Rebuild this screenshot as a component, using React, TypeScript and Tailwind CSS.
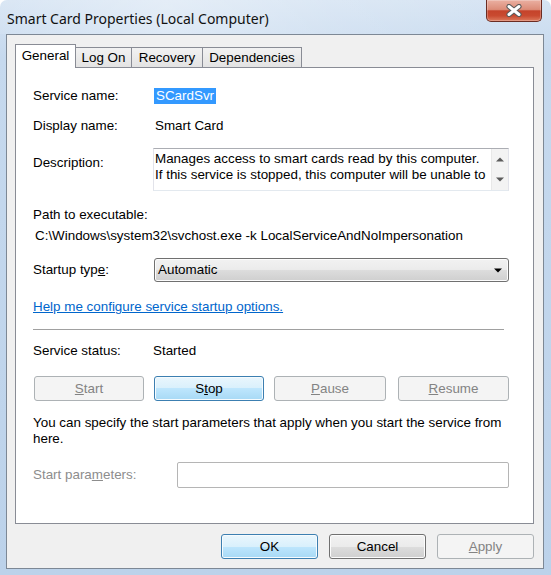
import type { ReactNode } from 'react';

type Kind = 'normal' | 'default' | 'disabled';

function Mn({ children }: { children: ReactNode }) {
    return <span className="underline">{children}</span>;
}

function Button({ kind, w, children }: { kind: Kind; w: string; children: ReactNode }) {
    const look =
        kind === 'default'
            ? 'border-[#3c7fb1] bg-[linear-gradient(180deg,#eaf6fd_0%,#d9f0fc_50%,#bee6fd_50%,#a7d9f5_100%)] shadow-[inset_0_0_0_1px_#f6fbfe] text-black'
            : kind === 'disabled'
                ? 'border-[#adb2b5] bg-[#f4f4f4] text-[#838383]'
                : 'border-[#707070] bg-[linear-gradient(180deg,#f2f2f2_0%,#ebebeb_50%,#dddddd_50%,#cfcfcf_100%)] shadow-[inset_0_0_0_1px_#fcfcfc] text-black';
    return (
        <div className={`${w} h-[25px] shrink-0 rounded-[3px] border flex items-center justify-center ${look}`}>
            {children}
        </div>
    );
}

function CloseButton() {
    return (
        <div className="mr-[9px] w-[56px] h-[22px] rounded-b-[5px] border border-t-0 border-[#6b2c22] bg-[linear-gradient(180deg,#eab0a2_0%,#dc8c78_45%,#c5432b_52%,#c94a30_75%,#dc7a5d_100%)] shadow-[inset_0_0_0_1px_rgba(255,255,255,0.25)] flex items-center justify-center">
            <svg width="18" height="13" viewBox="0 0 18 13">
                <path d="M4 2.5 L14 10.5 M14 2.5 L4 10.5" stroke="#5a5a5a" strokeWidth="5.2" strokeLinecap="round" />
                <path d="M4 2.5 L14 10.5 M14 2.5 L4 10.5" stroke="#ffffff" strokeWidth="3" strokeLinecap="round" />
            </svg>
        </div>
    );
}

function Triangle({ up, color }: { up: boolean; color: string }) {
    return (
        <svg width="8" height="5" viewBox="0 0 8 5">
            <path d={up ? 'M0 4.5 L4 0.5 L8 4.5 Z' : 'M0 0.5 L8 0.5 L4 4.5 Z'} fill={color} />
        </svg>
    );
}

export default function App() {
    return (
        <div className="w-[551px] h-[575px] flex flex-col rounded-t-[7px] bg-[linear-gradient(180deg,#d6e4f3_0%,#c6d9ee_10%,#bcd2ea_100%)] font-['Liberation_Sans',Arial,sans-serif] text-[13.4px] leading-[16px] text-black">
            {/* Title bar */}
            <div className="h-[34px] flex justify-between items-start rounded-t-[7px] bg-[linear-gradient(90deg,rgba(255,255,255,0.1)_0%,rgba(255,255,255,0.35)_30%,rgba(255,255,255,0.15)_60%,rgba(255,255,255,0)_100%)]">
                <div className="pl-[7px] pt-[9px] leading-[20px] font-['Noto_Sans',sans-serif] text-[14px] text-[#111]">
                    Smart Card Properties (Local Computer)
                </div>
                <CloseButton />
            </div>

            {/* Client area */}
            <div className="ml-[6px] w-[538px] h-[535px] border border-[#7d8895] bg-[#f0f0f0] flex flex-col pt-[9px]">
                {/* Tabs */}
                <div className="flex items-end h-[24px] -mb-px relative z-10 pl-[8px]">
                    <div className="w-[61px] h-[24px] border border-b-0 border-[#898c95] bg-white flex justify-center pt-[3px]">
                        General
                    </div>
                    <div className="w-[56px] h-[20px] mb-px border border-b-0 border-l-0 border-[#898c95] bg-[linear-gradient(180deg,#f2f2f2,#e3e3e3)] flex justify-center pt-[2px]">
                        Log On
                    </div>
                    <div className="w-[71px] h-[20px] mb-px border border-b-0 border-l-0 border-[#898c95] bg-[linear-gradient(180deg,#f2f2f2,#e3e3e3)] flex justify-center pt-[2px]">
                        Recovery
                    </div>
                    <div className="w-[99px] h-[20px] mb-px border border-b-0 border-l-0 border-[#898c95] bg-[linear-gradient(180deg,#f2f2f2,#e3e3e3)] flex justify-center pt-[2px]">
                        Dependencies
                    </div>
                </div>

                {/* Tab page */}
                <div className="ml-[8px] w-[519px] h-[457px] border border-[#898c95] bg-white pl-[17px] pr-[24px] flex flex-col">
                    <div className="mt-[20px] flex items-center h-[16px]">
                        <div className="w-[121px]">Service name:</div>
                        <span className="bg-[#3399ff] text-white px-[2px]">SCardSvr</span>
                    </div>

                    <div className="mt-[14px] flex items-center h-[16px]">
                        <div className="w-[122px]">Display name:</div>
                        <span>Smart Card</span>
                    </div>

                    <div className="mt-[14px] flex items-start">
                        <div className="w-[120px] mt-[7px]">Description:</div>
                        <div className="w-[356px] h-[43px] flex border border-[#e2e3ea] border-t-[#abadb3] border-b-[#e3e9ef] bg-white">
                            <div className="flex-1 overflow-hidden pl-[1px] pt-[2px] whitespace-nowrap">
                                <div>Manages access to smart cards read by this computer.</div>
                                <div>If this service is stopped, this computer will be unable to</div>
                            </div>
                            <div className="w-[17px] bg-[#f3f3f3] border-l border-[#e8e8e8] flex flex-col items-center justify-between py-[8px]">
                                <Triangle up color="#5b5b5b" />
                                <Triangle up={false} color="#5b5b5b" />
                            </div>
                        </div>
                    </div>

                    <div className="mt-[16px]">Path to executable:</div>
                    <div className="mt-[5px] pl-[2px] whitespace-nowrap">
                        C:\Windows\system32\svchost.exe -k LocalServiceAndNoImpersonation
                    </div>

                    <div className="mt-[14px] flex items-center">
                        <div className="w-[121px]">
                            Startup typ<Mn>e</Mn>:
                        </div>
                        <div className="w-[355px] h-[24px] rounded-[3px] border border-[#707070] bg-[linear-gradient(180deg,#f2f2f2_0%,#ebebeb_50%,#dddddd_50%,#cfcfcf_100%)] shadow-[inset_0_0_0_1px_#fcfcfc] flex items-center justify-between pl-[3px] pr-[6px]">
                            <span>Automatic</span>
                            <Triangle up={false} color="#000000" />
                        </div>
                    </div>

                    <div className="mt-[17px] text-[#0066cc] underline">
                        Help me configure service startup options.
                    </div>

                    <div className="mt-[14px] w-[471px] border-t border-[#a0a0a0]" />

                    <div className="mt-[13px] flex items-center h-[16px]">
                        <div className="w-[120px]">Service status:</div>
                        <span>Started</span>
                    </div>

                    <div className="mt-[17px] ml-[1px] flex">
                        <Button kind="disabled" w="w-[110px]">
                            <Mn>S</Mn>tart
                        </Button>
                        <div className="ml-[10px]">
                            <Button kind="default" w="w-[110px]">
                                S<Mn>t</Mn>op
                            </Button>
                        </div>
                        <div className="ml-[10px]">
                            <Button kind="disabled" w="w-[112px]">
                                <Mn>P</Mn>ause
                            </Button>
                        </div>
                        <div className="ml-[12px]">
                            <Button kind="disabled" w="w-[111px]">
                                <Mn>R</Mn>esume
                            </Button>
                        </div>
                    </div>

                    <div className="mt-[14px]">
                        You can specify the start parameters that apply when you start the service from
                        <br />
                        here.
                    </div>

                    <div className="mt-[15px] flex items-center">
                        <div className="w-[144px] text-[#8d8d8d]">
                            Start para<Mn>m</Mn>eters:
                        </div>
                        <div className="w-[332px] h-[26px] rounded-[2px] border border-[#b5b5b5] bg-white" />
                    </div>
                </div>

                {/* Dialog buttons */}
                <div className="mt-[10px] flex justify-end gap-[11px] pr-[9px]">
                    <Button kind="default" w="w-[97px]">OK</Button>
                    <Button kind="normal" w="w-[97px]">Cancel</Button>
                    <Button kind="disabled" w="w-[97px]">
                        <Mn>A</Mn>pply
                    </Button>
                </div>
            </div>
        </div>
    );
}
